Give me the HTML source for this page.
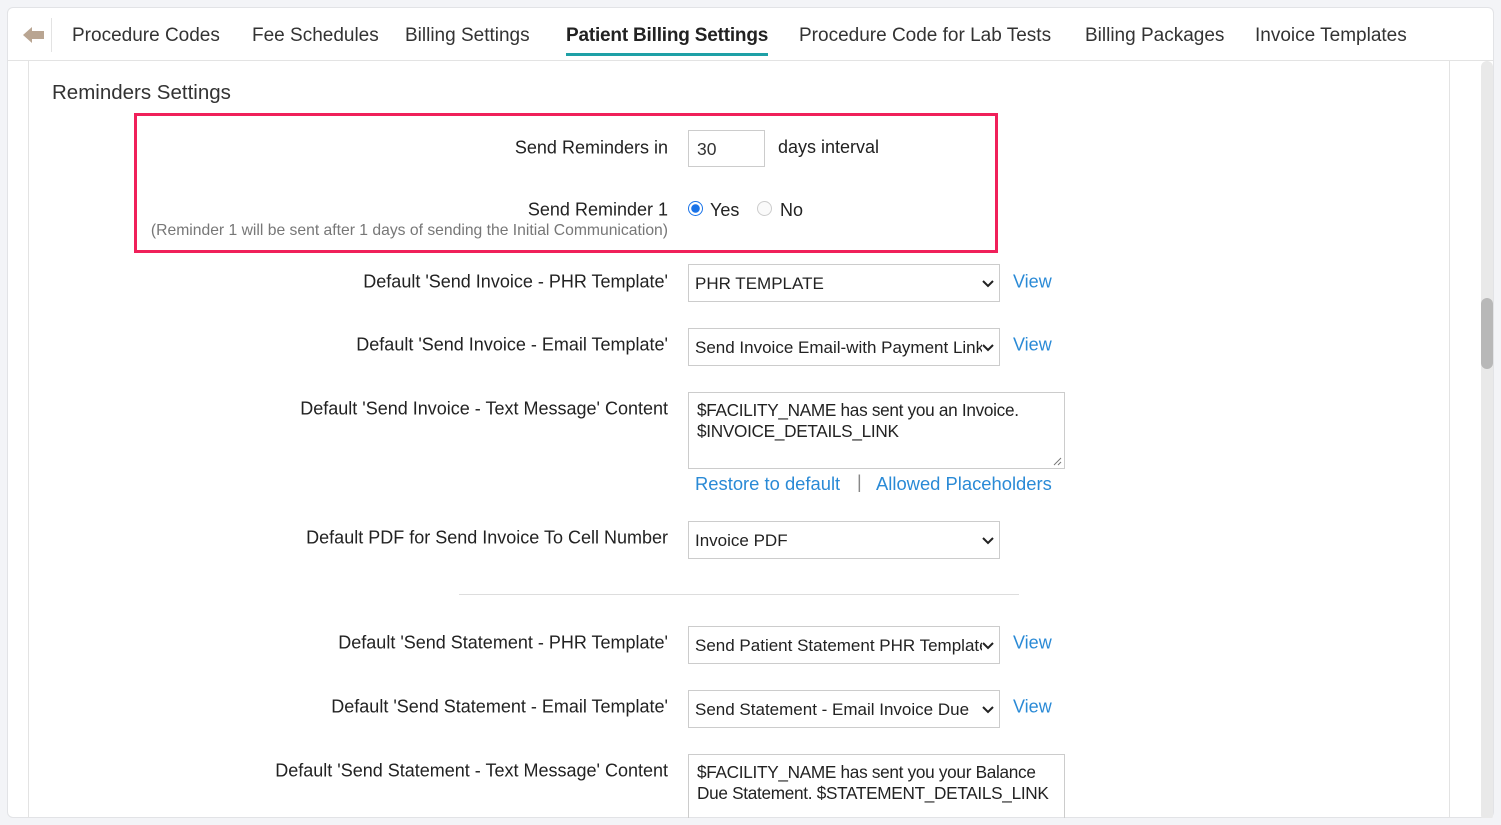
<!DOCTYPE html>
<html><head><meta charset="utf-8"><style>
*{box-sizing:border-box;margin:0;padding:0}
body{width:1501px;height:825px;background:#f3f4f7;font-family:"Liberation Sans",sans-serif;color:#222;position:relative;overflow:hidden}
.card{position:absolute;left:7px;top:7px;width:1487px;height:811px;background:#fff;border:1px solid #e2e3e6;border-radius:6px;overflow:hidden}
.a{position:absolute;white-space:nowrap}
.tab{position:absolute;top:25px;font-size:19px;color:#333;letter-spacing:0}
.lbl{position:absolute;right:833px;font-size:18px;white-space:nowrap;transform:translateY(-50%)}
.sel{position:absolute;left:688px;width:312px;height:38px;border:1px solid #ccc;font-size:17px;padding:9px 0 0 6px;overflow:hidden;white-space:nowrap}
.sel svg{position:absolute;right:5px;top:14px;background:#fff}
.sel span{display:block;width:287px;overflow:hidden}
.view{position:absolute;left:1013px;font-size:18px;color:#2a8ad6;transform:translateY(-50%)}
.ta{position:absolute;left:688px;width:377px;border:1px solid #ccc;font-size:17.2px;padding:7px 0 0 8px;line-height:21px;letter-spacing:-0.3px}
</style></head><body>
<div class="card"></div>
<svg class="a" style="left:23px;top:27px" width="22" height="16" viewBox="0 0 22 16"><path d="M0 8 L9 0 L9 4 L21 4 L21 12 L9 12 L9 16 Z" fill="#b9a592"/></svg>
<div class="a" style="left:51px;top:18px;width:1px;height:34px;background:#e3e3e3"></div>
<div class="tab" style="left:72px">Procedure Codes</div>
<div class="tab" style="left:252px">Fee Schedules</div>
<div class="tab" style="left:405px">Billing Settings</div>
<div class="tab" style="left:566px;font-weight:bold;color:#222;letter-spacing:-0.2px">Patient Billing Settings</div>
<div class="a" style="left:566px;top:53px;width:202px;height:3px;background:#1ea0a6"></div>
<div class="tab" style="left:799px">Procedure Code for Lab Tests</div>
<div class="tab" style="left:1085px">Billing Packages</div>
<div class="tab" style="left:1255px">Invoice Templates</div>
<div class="a" style="left:8px;top:60px;width:1485px;height:1px;background:#e3e3e3"></div>
<div class="a" style="left:28px;top:61px;width:1px;height:760px;background:#e3e3e3"></div>
<div class="a" style="left:1449px;top:61px;width:1px;height:760px;background:#e3e3e3"></div>
<div class="a" style="left:1481px;top:61px;width:12px;height:760px;background:#e9e9e9;border-radius:6px"></div>
<div class="a" style="left:1481px;top:298px;width:12px;height:71px;background:#b8b8b8;border-radius:6px"></div>

<div class="a" style="left:52px;top:81px;font-size:20.5px;color:#333">Reminders Settings</div>
<div class="a" style="left:134px;top:113px;width:864px;height:140px;border:3px solid #f0205a"></div>

<div class="lbl" style="top:148px">Send Reminders in</div>
<div class="a" style="left:688px;top:130px;width:77px;height:37px;border:1px solid #ccc;font-size:17.5px;padding:8px 0 0 8px;color:#333">30</div>
<div class="a" style="left:778px;top:137px;font-size:18px">days interval</div>

<div class="lbl" style="top:210px">Send Reminder 1</div>
<div class="lbl" style="top:231px;font-size:15.7px;color:#777">(Reminder 1 will be sent after 1 days of sending the Initial Communication)</div>
<div class="a" style="left:688px;top:201px;width:15px;height:15px;border-radius:50%;border:1px solid #1a73e8;background:radial-gradient(circle,#1a73e8 0 4px,#fff 4.5px)"></div>
<div class="a" style="left:710px;top:200px;font-size:18px">Yes</div>
<div class="a" style="left:757px;top:201px;width:15px;height:15px;border-radius:50%;border:1px solid #ccc;background:#fafafa"></div>
<div class="a" style="left:780px;top:200px;font-size:18px">No</div>

<div class="lbl" style="top:282px">Default 'Send Invoice - PHR Template'</div>
<div class="sel" style="top:264px"><span>PHR TEMPLATE</span><svg width="12" height="10" viewBox="0 0 12 10"><path d="M1 2 L6 7 L11 2" stroke="#222" stroke-width="2" fill="none"/></svg></div>
<div class="view" style="top:282px">View</div>

<div class="lbl" style="top:345px">Default 'Send Invoice - Email Template'</div>
<div class="sel" style="top:328px"><span>Send Invoice Email-with Payment Link</span><svg width="12" height="10" viewBox="0 0 12 10"><path d="M1 2 L6 7 L11 2" stroke="#222" stroke-width="2" fill="none"/></svg></div>
<div class="view" style="top:345px">View</div>

<div class="lbl" style="top:409px">Default 'Send Invoice - Text Message' Content</div>
<div class="ta" style="top:392px;height:77px">$FACILITY_NAME has sent you an Invoice.<br>$INVOICE_DETAILS_LINK</div>
<svg class="a" style="left:1052px;top:456px" width="10" height="10"><path d="M2 9 L9 2 M6 9 L9 6" stroke="#777" stroke-width="1"/></svg>
<div class="a" style="left:695px;top:473px;font-size:18.4px;color:#2a8ad6">Restore to default</div>
<div class="a" style="left:857px;top:472px;font-size:18px;color:#888">|</div>
<div class="a" style="left:876px;top:473px;font-size:18.4px;color:#2a8ad6">Allowed Placeholders</div>

<div class="lbl" style="top:538px">Default PDF for Send Invoice To Cell Number</div>
<div class="sel" style="top:521px"><span>Invoice PDF</span><svg width="12" height="10" viewBox="0 0 12 10"><path d="M1 2 L6 7 L11 2" stroke="#222" stroke-width="2" fill="none"/></svg></div>

<div class="a" style="left:459px;top:594px;width:560px;height:1px;background:#ddd"></div>

<div class="lbl" style="top:643px">Default 'Send Statement - PHR Template'</div>
<div class="sel" style="top:626px"><span>Send Patient Statement PHR Template</span><svg width="12" height="10" viewBox="0 0 12 10"><path d="M1 2 L6 7 L11 2" stroke="#222" stroke-width="2" fill="none"/></svg></div>
<div class="view" style="top:643px">View</div>

<div class="lbl" style="top:707px">Default 'Send Statement - Email Template'</div>
<div class="sel" style="top:690px"><span>Send Statement - Email Invoice Due</span><svg width="12" height="10" viewBox="0 0 12 10"><path d="M1 2 L6 7 L11 2" stroke="#222" stroke-width="2" fill="none"/></svg></div>
<div class="view" style="top:707px">View</div>

<div class="lbl" style="top:771px">Default 'Send Statement - Text Message' Content</div>
<div class="ta" style="top:754px;height:64px;border-bottom:none">$FACILITY_NAME has sent you your Balance<br>Due Statement. $STATEMENT_DETAILS_LINK</div>
<div class="a" style="left:0;top:818px;width:1501px;height:7px;background:#f3f4f7"></div>
</body></html>
